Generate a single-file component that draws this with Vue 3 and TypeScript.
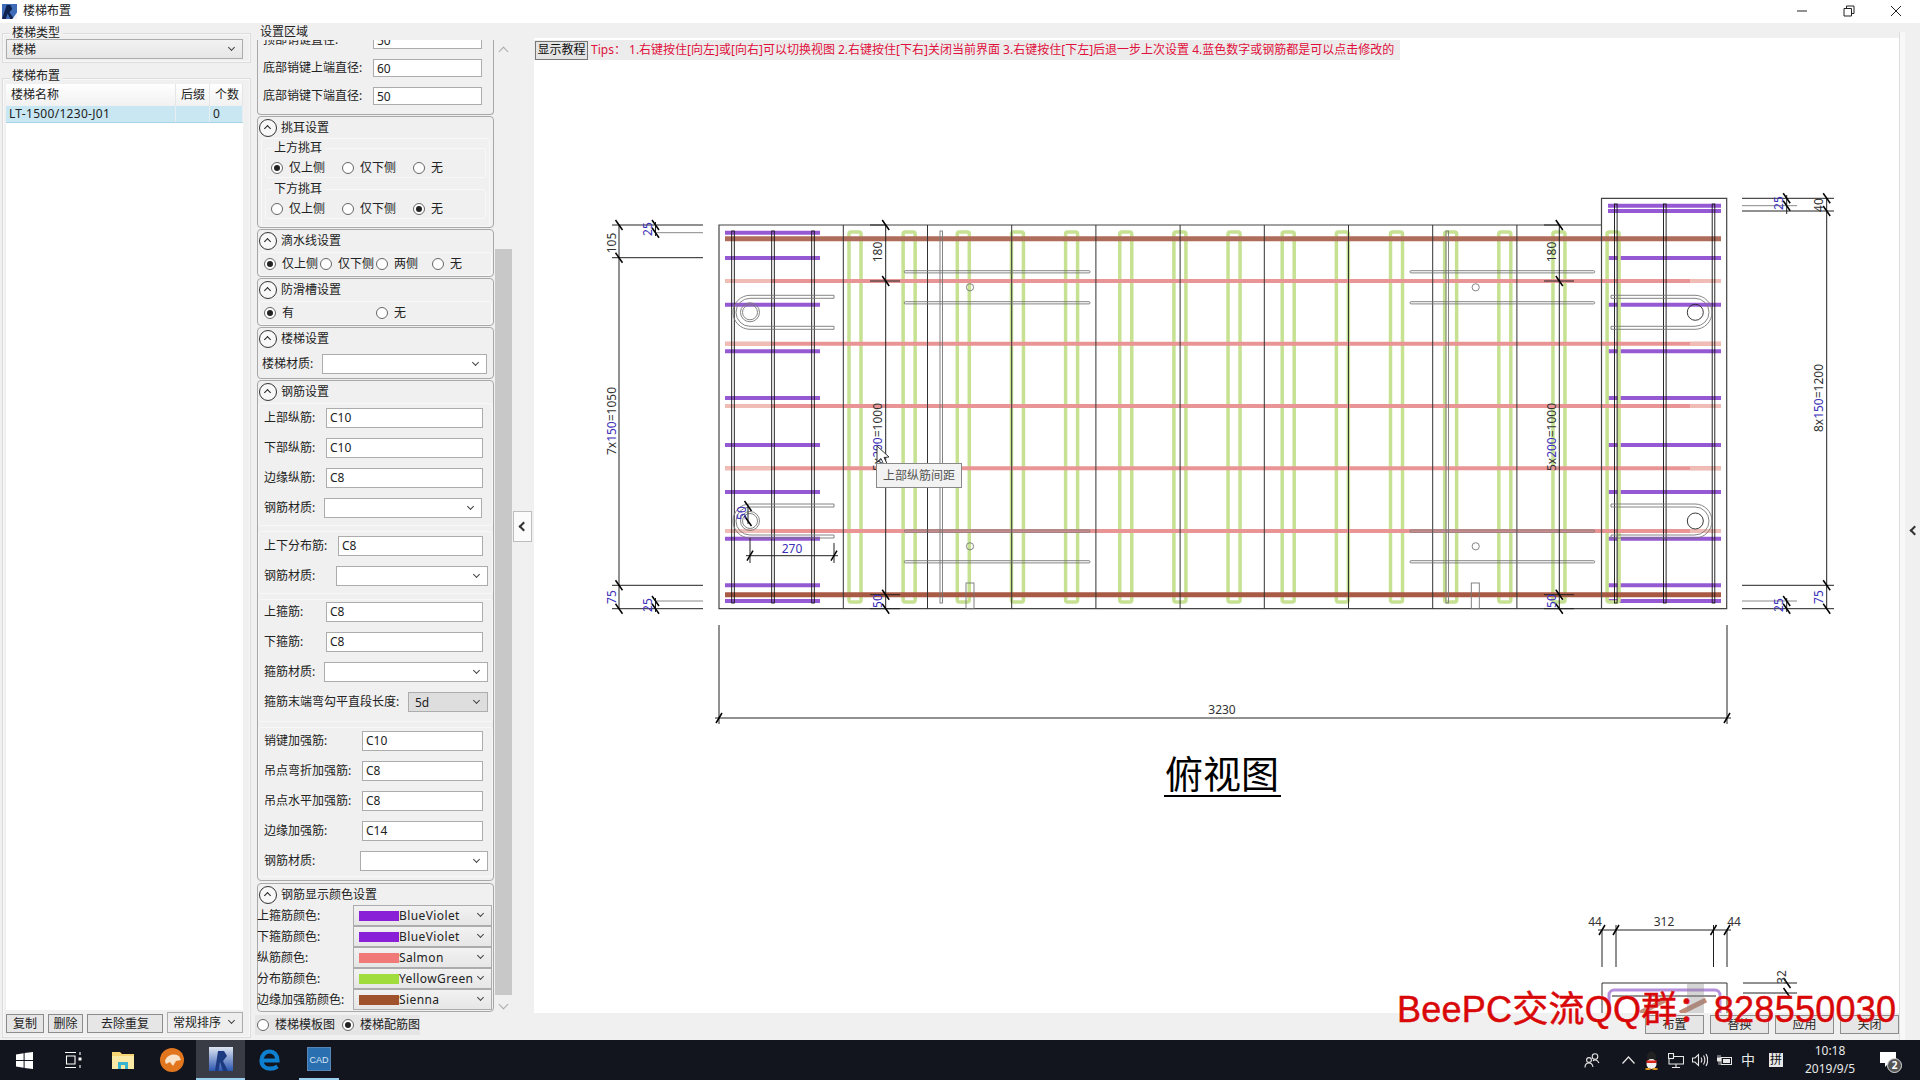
<template>
  <div class="window">
    <!-- 标题栏 -->
    <header class="titlebar">
      <svg class="app-icon" viewBox="0 0 16 16">
        <rect width="16" height="16" fill="#3f6cb8" />
        <path d="M0 16 L5 1 H9 L11 5 L8 9 L13 16 H9 L6 10 L4 16 Z" fill="#0f2350" />
        <path d="M11 16 L16 9 V16 Z" fill="#eef2f8" />
      </svg>
      <span class="title-text">楼梯布置</span>
      <div class="win-controls">
        <svg viewBox="0 0 12 12"><path d="M1 6 H11" /></svg>
        <svg viewBox="0 0 12 12"><path d="M1 3.5 H8.5 V11 H1 Z M3.5 3.5 V1 H11 V8.5 H8.5" /></svg>
        <svg viewBox="0 0 12 12"><path d="M1 1 L11 11 M11 1 L1 11" /></svg>
      </div>
    </header>

    <div class="body">
      <!-- 左侧列表 -->
      <aside class="left">
        <div class="group type-group">
          <span class="legend">楼梯类型</span>
          <div class="combo type-combo">楼梯</div>
        </div>
        <div class="group list-group">
          <span class="legend">楼梯布置</span>
          <div class="list">
            <div class="list-head">
              <span>楼梯名称</span><span>后缀</span><span>个数</span>
            </div>
            <div class="list-row">
              <span>LT-1500/1230-J01</span><span></span><span>0</span>
            </div>
          </div>
          <div class="left-actions">
            <button class="btn copy-btn">复制</button>
            <button class="btn del-btn">删除</button>
            <button class="btn dedupe-btn">去除重复</button>
            <div class="combo sort-combo">常规排序</div>
          </div>
        </div>
      </aside>

      <!-- 设置区域 -->
      <section class="settings">
        <span class="legend settings-legend">设置区域</span>
        <div class="scroll-wrap">
          <div class="scroll-content">
            <div class="panel first-panel">
              <div v-for="row in dowelRows" :key="row.label" class="row dowel-row">
                <span class="row-label">{{ row.label }}</span>
                <div class="field">{{ row.value }}</div>
              </div>
            </div>

            <div class="panel">
              <div class="panel-head"><i class="fold"></i>挑耳设置</div>
              <div class="inner ear-inner">
                <div v-for="ear in ears" :key="ear.title" class="ear-box">
                  <span class="legend ear-legend">{{ ear.title }}</span>
                  <label v-for="opt in earOptions" :key="opt" class="radio-item ear-item">
                    <i class="radio" :class="{ on: opt === ear.value }"></i>{{ opt }}
                  </label>
                </div>
              </div>
            </div>

            <div class="panel">
              <div class="panel-head"><i class="fold"></i>滴水线设置</div>
              <div class="inner radio-line">
                <label v-for="(opt, i) in dripOptions" :key="opt" class="radio-item drip-item">
                  <i class="radio" :class="{ on: i === 0 }"></i>{{ opt }}
                </label>
              </div>
            </div>

            <div class="panel">
              <div class="panel-head"><i class="fold"></i>防滑槽设置</div>
              <div class="inner radio-line">
                <label class="radio-item slip-item"><i class="radio on"></i>有</label>
                <label class="radio-item slip-item"><i class="radio"></i>无</label>
              </div>
            </div>

            <div class="panel stair-panel">
              <div class="panel-head"><i class="fold"></i>楼梯设置</div>
              <div class="row stair-row">
                <span class="row-label">楼梯材质:</span>
                <div class="combo white-combo"></div>
              </div>
            </div>

            <div class="panel rebar-panel">
              <div class="panel-head"><i class="fold"></i>钢筋设置</div>
              <div v-for="box in rebarBoxes" :key="box.key" class="rebar-box" :class="box.key">
                <div v-for="row in box.rows" :key="row.label" class="row">
                  <span class="row-label">{{ row.label }}</span>
                  <div v-if="row.kind === 'input'" class="field">{{ row.value }}</div>
                  <div v-else-if="row.kind === 'select'" class="combo white-combo"></div>
                  <div v-else class="combo hook-combo">{{ row.value }}</div>
                </div>
              </div>
            </div>

            <div class="panel color-panel">
              <div class="panel-head"><i class="fold"></i>钢筋显示颜色设置</div>
              <div v-for="c in colorRows" :key="c.label" class="color-row">
                <span class="color-label">{{ c.label }}</span>
                <div class="combo color-combo">
                  <i class="swatch" :style="{ background: c.color }"></i>{{ c.name }}
                </div>
              </div>
            </div>
          </div>
          <div class="scrollbar">
            <i class="sb-arrow up"></i>
            <div class="sb-thumb"></div>
            <i class="sb-arrow down"></i>
          </div>
        </div>
        <div class="view-switch">
          <label class="radio-item"><i class="radio"></i>楼梯模板图</label>
          <label class="radio-item"><i class="radio on"></i>楼梯配筋图</label>
        </div>
      </section>

      <button class="collapse-btn"><i></i></button>

      <!-- 图纸区域 -->
      <main class="canvas-area">
        <div class="sheet">
          <div class="tips-bar">
            <button class="tutorial-btn">显示教程</button>
            <span class="tips">Tips：&nbsp;1.右键按住[向左]或[向右]可以切换视图 2.右键按住[下右]关闭当前界面 3.右键按住[下左]后退一步上次设置 4.蓝色数字或钢筋都是可以点击修改的</span>
          </div>
          <svg class="drawing" viewBox="534 60 1365 953" width="1365" height="953">
            <!-- 箍筋 -->
            <g stroke="#8d4bd0" stroke-width="4" stroke-opacity="0.92">
              <line v-for="y in leftStirrups" :key="'ls' + y" x1="725" x2="820" :y1="y" :y2="y" />
              <line v-for="y in rightStirrups" :key="'rs' + y" x1="1608" x2="1721" :y1="y" :y2="y" />
            </g>
            <!-- 分布筋 -->
            <g fill="none" stroke="#c6e192" stroke-width="3.5">
              <rect v-for="x in greenBars" :key="'g' + x" :x="x" y="232" width="12" height="370" rx="2" />
            </g>
            <!-- 纵筋 -->
            <g stroke="#e99595" stroke-width="4">
              <line v-for="y in salmonBars" :key="'s' + y" x1="725" x2="1721" :y1="y" :y2="y" />
            </g>
            <g stroke="#efbdb6" stroke-width="4">
              <template v-for="y in salmonBars" :key="'sl' + y">
                <line x1="725" x2="772" :y1="y" :y2="y" />
                <line x1="1690" x2="1721" :y1="y" :y2="y" />
              </template>
            </g>
            <line x1="725" x2="1721" y1="238.7" y2="238.7" stroke="#ae6d5b" stroke-width="5" />
            <line x1="725" x2="1721" y1="594.7" y2="594.7" stroke="#a85a44" stroke-width="5" />

            <!-- 轮廓 -->
            <path d="M719 225 H1601.5 V198.3 H1726.7 V608.7 H719 Z M1601.5 225 V608.7" fill="none" stroke="#444" stroke-width="1.2" />
            <g stroke="#333" stroke-width="1">
              <line v-for="x in gridLines" :key="'v' + x" :x1="x" :x2="x" y1="225" y2="608.7" />
            </g>
            <g fill="none" stroke="#111" stroke-width="0.9">
              <rect v-for="x in leftTies" :key="'lt' + x" :x="x" y="231" width="2.6" height="372" />
              <rect v-for="x in rightTies" :key="'rt' + x" :x="x" y="204" width="2.6" height="399" />
            </g>
            <g fill="none" stroke="#777" stroke-width="0.9">
              <rect x="940" y="231" width="2.5" height="372" />
              <rect x="1446" y="231" width="2.5" height="372" />
              <rect x="966" y="583" width="8" height="25.7" />
              <rect x="1471.3" y="583" width="8" height="25.7" />
              <template v-for="y in pinLines" :key="'p' + y">
                <rect x="904.3" :y="y" width="185.7" height="2.2" rx="1" />
                <rect x="1410" :y="y" width="184.7" height="2.2" rx="1" />
              </template>
              <circle cx="970" cy="287.3" r="3.6" />
              <circle cx="970" cy="546.3" r="3.6" />
              <circle cx="1475.7" cy="287.3" r="3.6" />
              <circle cx="1475.7" cy="546.3" r="3.6" />
              <template v-for="y in loopCenters" :key="'l' + y">
                <path :d="leftLoop(y)" />
                <path :d="rightLoop(y)" />
                <circle cx="750" :cy="y" r="9.5" />
                <circle cx="750" :cy="y" r="7.5" />
                <circle cx="1695.3" :cy="y" r="8" stroke="#222" />
              </template>
            </g>

            <!-- 尺寸线 -->
            <g stroke="#222" stroke-width="1">
              <line v-for="(l, i) in dimLines" :key="'d' + i" :x1="l[0]" :y1="l[1]" :x2="l[2]" :y2="l[3]" />
            </g>
            <g stroke="#888" stroke-width="1">
              <line v-for="(l, i) in grayLines" :key="'dg' + i" :x1="l[0]" :y1="l[1]" :x2="l[2]" :y2="l[3]" />
            </g>
            <g stroke="#000" stroke-width="1.5">
              <line v-for="(t, i) in ticksV" :key="'tv' + i" :x1="t[0] - 3.5" :y1="t[1] - 5" :x2="t[0] + 3.5" :y2="t[1] + 5" />
              <line v-for="(t, i) in ticksH" :key="'th' + i" :x1="t[0] - 3" :y1="t[1] + 5" :x2="t[0] + 3" :y2="t[1] - 5" />
            </g>

            <!-- 尺寸文字 -->
            <g class="dim-text">
              <text v-for="t in dimTexts" :key="t.x + '-' + t.y" :x="t.x" :y="t.y" :transform="`rotate(-90 ${t.x} ${t.y})`" text-anchor="middle">
                <tspan v-for="(p, i) in t.parts" :key="i" :class="{ blue: p.blue }">{{ p.s }}</tspan>
              </text>
              <text x="792" y="553" text-anchor="middle" class="blue">270</text>
              <text x="1222" y="714" text-anchor="middle">3230</text>
              <text x="1595" y="926" text-anchor="middle">44</text>
              <text x="1664" y="926" text-anchor="middle">312</text>
              <text x="1734" y="926" text-anchor="middle">44</text>
            </g>

            <text x="1222" y="788" text-anchor="middle" class="view-title">俯视图</text>
            <line x1="1164" x2="1281" y1="796" y2="796" stroke="#000" stroke-width="2" />

            <!-- 下方剖面 -->
            <g fill="none">
              <path d="M1602 1013 V983 H1727 V1013" stroke="#333" />
              <rect x="1609" y="990" width="111" height="30" rx="5" stroke="#b48fdc" stroke-width="3" />
              <path d="M1612 996 H1716" stroke="#222" />
              <path d="M1640 1013 L1665 1000 M1680 1013 L1706 1000" stroke="#c08a78" stroke-width="5" />
            </g>
            <rect x="1687" y="983" width="17" height="30" fill="#888" opacity="0.35" />

            <!-- 鼠标和提示 -->
            <path d="M877 446 V462 L881 458.5 L884 465 L887 463.5 L884 457.5 L889 457 Z" fill="#fff" stroke="#222" stroke-width="0.9" />
          </svg>
          <div class="tooltip">上部纵筋间距</div>
        </div>
        <div class="bottom-actions">
          <button v-for="b in actionButtons" :key="b" class="btn action-btn">{{ b }}</button>
        </div>
      </main>

      <div class="right-rail"><i></i></div>
    </div>

    <!-- 任务栏 -->
    <footer class="taskbar">
      <div class="task-left">
        <div class="task-slot">
          <svg width="17" height="17" viewBox="0 0 17 17" fill="#fff">
            <path d="M0 2.4 L7.6 1.3 V8 H0 Z M8.6 1.1 L17 0 V8 H8.6 Z M0 9 H7.6 V15.7 L0 14.6 Z M8.6 9 H17 V17 L8.6 15.9 Z" />
          </svg>
        </div>
        <div class="task-slot">
          <svg width="17" height="16" viewBox="0 0 17 16" fill="none" stroke="#fff" stroke-width="1.1">
            <path d="M0 .5 H11 M0 15.5 H11 M1.5 4 H10 V12 H1.5 Z M15 0 V3 M15 13 V16" />
            <rect x="13.5" y="5.5" width="3" height="3" fill="#fff" stroke="none" />
          </svg>
        </div>
        <div class="task-slot">
          <svg width="22" height="18" viewBox="0 0 22 18">
            <path d="M0 1 H8 L10 3 H22 V18 H0 Z" fill="#f6d673" />
            <rect y="5" width="22" height="13" fill="#fbe9a6" />
            <path d="M6 18 V11 H16 V18 H13 V14 H9 V18 Z" fill="#39b4d0" />
          </svg>
        </div>
        <div class="task-slot">
          <svg width="24" height="24" viewBox="0 0 24 24">
            <circle cx="12" cy="12" r="12" fill="#e2761f" />
            <path d="M5 13 C7 7 13 5 19 8 L21 12 L16 13 L13 18 L10 14 L6 16 Z" fill="#f8e2c8" />
          </svg>
        </div>
        <div class="task-slot active">
          <svg width="24" height="24" viewBox="0 0 24 24">
            <defs>
              <linearGradient id="revitBg" x1="0" y1="0" x2="0" y2="1">
                <stop offset="0" stop-color="#dfe6f2" />
                <stop offset="1" stop-color="#2a55b0" />
              </linearGradient>
            </defs>
            <rect width="24" height="24" fill="url(#revitBg)" />
            <path d="M6 24 L9 4 H15 L18 9 L14 14 L19 24 H14 L11 15 L9.5 24 Z" fill="#1c3a80" />
          </svg>
        </div>
        <div class="task-slot">
          <svg width="21" height="22" viewBox="0 0 21 22" fill="none" stroke="#0f7fd0" stroke-width="4.2">
            <path d="M3 11.5 H18.5 C18.5 6 15 2.5 10.5 2.5 C6 2.5 2.5 6.5 2.5 11.5 C2.5 16.5 6 19.7 11 19.7 C14 19.7 16.5 18.8 18.5 17.5" />
          </svg>
        </div>
        <div class="task-slot underlined">
          <svg width="24" height="24" viewBox="0 0 24 24">
            <rect width="24" height="24" rx="2" fill="#2a6fb0" stroke="#7f9fc0" />
            <text x="12" y="16" text-anchor="middle" class="cad-text">CAD</text>
          </svg>
        </div>
      </div>
      <div class="tray">
        <svg class="t-people" width="16" height="15" viewBox="0 0 16 15" fill="none" stroke="#e8e8e8" stroke-width="1.1">
          <circle cx="11" cy="3.5" r="2.8" /><circle cx="5" cy="7" r="2.4" />
          <path d="M1 14.5 C1 11 3 10 5 10 C7 10 8.5 11 9 14 M9 8 C10 6.5 13 6.3 15 10" />
        </svg>
        <svg class="t-chevron" width="13" height="8" viewBox="0 0 13 8" fill="none" stroke="#e8e8e8" stroke-width="1.2"><path d="M.5 7.5 L6.5 1 L12.5 7.5" /></svg>
        <svg class="t-qq" width="15" height="19" viewBox="0 0 15 19">
          <ellipse cx="7.5" cy="6" rx="4.5" ry="5.5" fill="#222" />
          <ellipse cx="7.5" cy="13" rx="5" ry="5" fill="#f2f2f2" />
          <path d="M2 9.5 H13 L12 12 H3 Z" fill="#d8261c" />
          <ellipse cx="4" cy="18" rx="3" ry="1" fill="#e8a020" /><ellipse cx="11" cy="18" rx="3" ry="1" fill="#e8a020" />
        </svg>
        <svg class="t-net" width="16" height="15" viewBox="0 0 16 15" fill="none" stroke="#e8e8e8" stroke-width="1.1">
          <path d="M1 3.5 H15.5 V11 H1 V6 M8 11 V14 M4 14.5 H12" /><rect x=".5" y=".5" width="5" height="5" fill="#14171f" />
        </svg>
        <svg class="t-vol" width="16" height="14" viewBox="0 0 16 14" fill="none" stroke="#e8e8e8" stroke-width="1.1">
          <path d="M.5 5 H3 L6.5 1.5 V12.5 L3 9 H.5 Z M9 4.5 C10 6 10 8 9 9.5 M11.5 2.5 C13 5 13 9 11.5 11.5 M14 1 C16 4.5 16 9.5 14 13" />
        </svg>
        <svg class="t-bat" width="16" height="11" viewBox="0 0 16 11">
          <rect x="4" y="2.5" width="10.5" height="7" fill="none" stroke="#e8e8e8" />
          <rect x="6" y="4" width="7" height="4" fill="#e8e8e8" />
          <path d="M0 3 H4 V6 H0 Z M1 0 V3 M3 0 V3 M2 6 V10" stroke="#e8e8e8" fill="#e8e8e8" stroke-width=".8" />
        </svg>
        <span class="t-zh">中</span>
        <span class="t-pin">拼</span>
        <div class="clock">
          <span>10:18</span>
          <span>2019/9/5</span>
        </div>
        <div class="notify">
          <svg width="16" height="15" viewBox="0 0 16 15" fill="#fff"><path d="M0 0 H16 V11 H9 L5 15 V11 H0 Z" /></svg>
          <b>2</b>
        </div>
      </div>
    </footer>

    <div class="watermark">BeePC交流QQ群：828550030</div>
  </div>
</template>

<script setup lang="ts">
type RebarRow = { label: string; value?: string; kind: 'input' | 'select' | 'hook' };
type DimPart = { s: string; blue?: boolean };

const dowelRows = [
  { label: '顶部销键直径:', value: '50' },
  { label: '底部销键上端直径:', value: '60' },
  { label: '底部销键下端直径:', value: '50' }
];

const earOptions = ['仅上侧', '仅下侧', '无'];
const ears = [
  { title: '上方挑耳', value: '仅上侧' },
  { title: '下方挑耳', value: '无' }
];
const dripOptions = ['仅上侧', '仅下侧', '两侧', '无'];

const rebarBoxes: { key: string; rows: RebarRow[] }[] = [
  {
    key: 'box-a',
    rows: [
      { label: '上部纵筋:', value: 'C10', kind: 'input' },
      { label: '下部纵筋:', value: 'C10', kind: 'input' },
      { label: '边缘纵筋:', value: 'C8', kind: 'input' },
      { label: '钢筋材质:', kind: 'select' }
    ]
  },
  {
    key: 'box-b',
    rows: [
      { label: '上下分布筋:', value: 'C8', kind: 'input' },
      { label: '钢筋材质:', kind: 'select' }
    ]
  },
  {
    key: 'box-c',
    rows: [
      { label: '上箍筋:', value: 'C8', kind: 'input' },
      { label: '下箍筋:', value: 'C8', kind: 'input' },
      { label: '箍筋材质:', kind: 'select' },
      { label: '箍筋末端弯勾平直段长度:', value: '5d', kind: 'hook' }
    ]
  },
  {
    key: 'box-d',
    rows: [
      { label: '销键加强筋:', value: 'C10', kind: 'input' },
      { label: '吊点弯折加强筋:', value: 'C8', kind: 'input' },
      { label: '吊点水平加强筋:', value: 'C8', kind: 'input' },
      { label: '边缘加强筋:', value: 'C14', kind: 'input' },
      { label: '钢筋材质:', kind: 'select' }
    ]
  }
];

const colorRows = [
  { label: '上箍筋颜色:', color: '#8a1fd8', name: 'BlueViolet' },
  { label: '下箍筋颜色:', color: '#8a1fd8', name: 'BlueViolet' },
  { label: '纵筋颜色:', color: '#f07a78', name: 'Salmon' },
  { label: '分布筋颜色:', color: '#9fdc3c', name: 'YellowGreen' },
  { label: '边缘加强筋颜色:', color: '#a0522d', name: 'Sienna' }
];

const actionButtons = ['布置', '替换', '应用', '关闭'];

// 图纸数据，坐标直接用画布坐标
const commonStirrups = [258, 304.7, 351.3, 398, 445, 492, 538.7, 585.3, 601];
const leftStirrups = [232.7, ...commonStirrups];
const rightStirrups = [205.7, 211, ...commonStirrups];
const salmonBars = [281, 343.7, 406, 468.3, 531];
const greenBars = Array.from({ length: 15 }, (_, i) => 849 + i * 54.15);
const gridLines = Array.from({ length: 9 }, (_, i) => 843.3 + i * 84.2);
const leftTies = [731.7, 771.7, 811.7];
const rightTies = [1614.5, 1663.5, 1712.2];
const pinLines = [270.7, 301.7, 530, 560.7];
const loopCenters = [312.3, 521];

const leftLoop = (y: number) =>
  `M834 ${y - 17} H750 A17 17 0 0 0 750 ${y + 17} H834 V${y + 14} H750 A14 14 0 0 1 750 ${y - 14} H834 Z`;
const rightLoop = (y: number) =>
  `M1611 ${y - 17} H1695 A17 17 0 0 1 1695 ${y + 17} H1611 V${y + 14} H1695 A14 14 0 0 0 1695 ${y - 14} H1611 Z`;

const dimLines: number[][] = [
  [612, 225, 703, 225], [612, 257.7, 703, 257.7], [612, 585.3, 703, 585.3], [612, 608.7, 703, 608.7],
  [619, 225, 619, 608.7], [655.5, 222, 655.5, 236], [655.5, 598, 655.5, 612],
  [870, 225, 885.7, 225], [870, 281, 900, 281], [885.7, 225, 885.7, 608.7], [870, 594.7, 900, 594.7], [870, 608.7, 900, 608.7],
  [1544, 225, 1559.3, 225], [1544, 281, 1574, 281], [1559.3, 225, 1559.3, 608.7], [1544, 594.7, 1574, 594.7], [1544, 608.7, 1574, 608.7],
  [1742, 198.3, 1834, 198.3], [1742, 211, 1834, 211], [1742, 585.3, 1834, 585.3], [1742, 608.7, 1834, 608.7],
  [1826.7, 198.3, 1826.7, 608.7], [1786.7, 195, 1786.7, 214], [1786.7, 598, 1786.7, 612],
  [750, 538, 750, 563], [834, 543, 834, 563], [746, 555.7, 838, 555.7], [748, 505, 748, 524],
  [719, 625, 719, 724], [1727, 625, 1727, 724], [715, 718, 1731, 718],
  [1602, 930, 1602, 967], [1616, 925, 1616, 967], [1713.5, 925, 1713.5, 967], [1727, 930, 1727, 967], [1598, 930, 1731, 930],
  [1743, 983, 1797, 983], [1743, 993, 1797, 993]
];
const grayLines: number[][] = [
  [655, 232.7, 703, 232.7], [655, 601, 703, 601], [1742, 205.7, 1797, 205.7], [1742, 601, 1797, 601]
];
const ticksV: number[][] = [
  [619, 225], [619, 257.7], [619, 585.3], [619, 608.7], [655.5, 225], [655.5, 232.7], [655.5, 601], [655.5, 608.7],
  [885.7, 225], [885.7, 281], [885.7, 594.7], [885.7, 608.7], [1559.3, 225], [1559.3, 281], [1559.3, 594.7], [1559.3, 608.7],
  [1826.7, 198.3], [1826.7, 211], [1826.7, 585.3], [1826.7, 608.7], [1786.7, 198.3], [1786.7, 205.7], [1786.7, 601], [1786.7, 608.7],
  [748, 506], [748, 521], [1787, 983], [1787, 993]
];
const ticksH: number[][] = [
  [750, 555.7], [834, 555.7], [719, 718], [1727, 718], [1602, 930], [1616, 930], [1713.5, 930], [1727, 930]
];

const dimTexts: { x: number; y: number; parts: DimPart[] }[] = [
  { x: 616, y: 243, parts: [{ s: '105' }] },
  { x: 652, y: 229, parts: [{ s: '25', blue: true }] },
  { x: 652, y: 605, parts: [{ s: '25', blue: true }] },
  { x: 616, y: 421, parts: [{ s: '7x' }, { s: '150', blue: true }, { s: '=1050' }] },
  { x: 616, y: 597, parts: [{ s: '75', blue: true }] },
  { x: 882, y: 252, parts: [{ s: '180' }] },
  { x: 882, y: 437, parts: [{ s: '5x' }, { s: '200', blue: true }, { s: '=1000' }] },
  { x: 882, y: 601, parts: [{ s: '50', blue: true }] },
  { x: 1556, y: 252, parts: [{ s: '180' }] },
  { x: 1556, y: 437, parts: [{ s: '5x' }, { s: '200', blue: true }, { s: '=1000' }] },
  { x: 1556, y: 601, parts: [{ s: '50', blue: true }] },
  { x: 1783, y: 203, parts: [{ s: '25', blue: true }] },
  { x: 1783, y: 605, parts: [{ s: '25', blue: true }] },
  { x: 1823, y: 205, parts: [{ s: '40' }] },
  { x: 1823, y: 398, parts: [{ s: '8x' }, { s: '150', blue: true }, { s: '=1200' }] },
  { x: 1823, y: 597, parts: [{ s: '75', blue: true }] },
  { x: 746, y: 513, parts: [{ s: '50', blue: true }] },
  { x: 1786, y: 977, parts: [{ s: '32' }] }
];
</script>

<style>
html,
body {
  margin: 0;
  background: #fff;
}
</style>

<style scoped>
.window {
  position: relative;
  width: 1920px;
  height: 1080px;
  overflow: hidden;
  display: flex;
  flex-direction: column;
  font-family: "Noto Sans", "Noto Sans CJK SC", sans-serif;
  font-size: 12px;
  line-height: 16px;
  color: #222;
  background: #f0f0f0;
}

/* 标题栏 */
.titlebar {
  height: 23px;
  flex-shrink: 0;
  display: flex;
  align-items: center;
  background: #fff;
  padding: 0 0 1px 2px;
  box-sizing: border-box;
}
.app-icon {
  width: 15px;
  height: 15px;
}
.title-text {
  margin-left: 6px;
}
.win-controls {
  margin-left: auto;
  display: flex;
  gap: 35px;
  padding-right: 18px;
}
.win-controls svg {
  width: 12px;
  height: 12px;
  fill: none;
  stroke: #222;
  stroke-width: 1;
}

.body {
  flex: 1;
  display: flex;
  min-height: 0;
}

.group {
  position: relative;
  border: 1px solid #dcdcdc;
  box-shadow: inset 0 0 0 1px #f8f8f8;
  box-sizing: border-box;
}
.legend {
  position: absolute;
  left: 7px;
  top: -9px;
  padding: 0 3px 0 2px;
  background: #f0f0f0;
  white-space: nowrap;
}

/* 左侧 */
.left {
  width: 254px;
  flex-shrink: 0;
  padding: 10px 3px 2px 2px;
  box-sizing: border-box;
  display: flex;
  flex-direction: column;
  gap: 15px;
}
.type-group {
  height: 30px;
  padding: 5px 4px 0 3px;
}
.list-group {
  flex: 1;
  padding: 5px 7px 0 3px;
  display: flex;
  flex-direction: column;
}
.list-group > .legend {
  top: -11px;
}
.list {
  flex: 1;
  background: #fff;
}
.list-head,
.list-row {
  display: grid;
  grid-template-columns: 170px 34px 33px;
}
.list-head {
  height: 23px;
  line-height: 22px;
  background: linear-gradient(#fff, #f1f1f1);
  border-bottom: 1px solid #d5d5d5;
  box-sizing: border-box;
}
.list-head span {
  padding-left: 5px;
  border-right: 1px solid #e6e6e6;
}
.list-row {
  height: 17px;
  line-height: 16px;
  background: #c9e7f3;
  border-bottom: 1px solid #a9d4e6;
  box-sizing: border-box;
  margin-top: -1px;
  letter-spacing: 0.3px;
}
.list-row span {
  padding-left: 3px;
  border-right: 1px solid #e6eef2;
}
.left-actions {
  height: 27px;
  display: flex;
  align-items: flex-start;
  padding-top: 4px;
  box-sizing: border-box;
  gap: 4px;
}

.btn {
  font: inherit;
  color: #222;
  height: 19px;
  padding: 0;
  border: 1px solid #8c8c8c;
  background: #e6e6e6;
  box-sizing: border-box;
}
.copy-btn {
  width: 38px;
}
.del-btn {
  width: 35px;
}
.dedupe-btn {
  width: 76px;
}

/* 下拉框 */
.combo {
  position: relative;
  height: 20px;
  line-height: 19px;
  box-sizing: border-box;
  border: 1px solid #acacac;
  background: linear-gradient(#f2f2f2, #e6e6e6);
  padding-left: 5px;
}
.combo::after {
  content: "";
  position: absolute;
  right: 8px;
  top: 5px;
  width: 4px;
  height: 4px;
  border-right: 1.3px solid #444;
  border-bottom: 1.3px solid #444;
  transform: rotate(45deg);
}
.white-combo {
  background: #fff;
}
.type-combo {
  width: 237px;
}
.sort-combo {
  width: 76px;
  margin-top: -2px;
  text-align: left;
  height: 21px;
  background: #eee;
}

/* 设置区域 */
.settings {
  position: relative;
  width: 257px;
  flex-shrink: 0;
  margin-left: 1px;
  padding-top: 17px;
  box-sizing: border-box;
}
.settings-legend {
  left: 3px;
  top: 1px;
}
.scroll-wrap {
  height: 972px;
  display: flex;
  overflow: hidden;
}
.scroll-content {
  width: 237px;
  margin-left: 2px;
  display: flex;
  flex-direction: column;
  gap: 1px;
  flex-shrink: 0;
}
.panel {
  border: 1px solid #a8a8a8;
  border-radius: 4px;
  box-sizing: border-box;
  background: #f0f0f0;
}
.first-panel {
  height: 75px;
  overflow: hidden;
  border-top: 0;
  border-radius: 0 0 4px 4px;
}
.panel-head {
  display: flex;
  align-items: center;
  height: 21px;
  gap: 4px;
  padding-left: 1px;
}
.fold {
  position: relative;
  display: block;
  width: 16px;
  height: 16px;
  border: 1.5px solid #333;
  border-radius: 50%;
  background: #f8f8f8;
}
.fold::after {
  content: "";
  position: absolute;
  left: 5px;
  top: 6.5px;
  width: 4px;
  height: 4px;
  border-left: 1.6px solid #222;
  border-top: 1.6px solid #222;
  transform: rotate(45deg);
}

.row {
  display: flex;
  align-items: center;
  height: 20px;
  margin-bottom: 10px;
}
.row:last-child {
  margin-bottom: 0;
}
.field {
  box-sizing: border-box;
  height: 20px;
  line-height: 17px;
  padding-left: 3px;
  background: #fff;
  border: 1px solid #acacac;
}
.row-label {
  white-space: nowrap;
}

.dowel-row {
  height: 18px;
  margin-bottom: 10px;
  padding-left: 5px;
}
.dowel-row:first-child {
  margin-top: -9px;
}
.dowel-row .row-label {
  width: 110px;
}
.dowel-row .field {
  width: 109px;
  height: 18px;
}

.inner {
  margin: 0 3px;
  border: 1px solid #f8f8f8;
  border-radius: 3px;
  box-sizing: border-box;
}
.ear-inner {
  height: 89px;
  padding: 9px 3px 0;
}
.ear-box {
  position: relative;
  height: 30px;
  margin-bottom: 11px;
  padding: 9px 0 0 5px;
  border: 1px solid #f8f8f8;
  border-radius: 3px;
  box-sizing: border-box;
  display: flex;
}
.ear-legend {
  left: 6px;
  top: -9px;
}
.radio-item {
  display: flex;
  align-items: center;
  gap: 6px;
  white-space: nowrap;
}
.radio {
  display: block;
  position: relative;
  width: 12px;
  height: 12px;
  border: 1px solid #666;
  border-radius: 50%;
  background: #fff;
  box-sizing: border-box;
  flex-shrink: 0;
}
.radio.on::after {
  content: "";
  position: absolute;
  left: 2px;
  top: 2px;
  width: 6px;
  height: 6px;
  border-radius: 50%;
  background: #222;
}
.ear-item {
  width: 71px;
}
.radio-line {
  height: 24px;
  margin: 1px 1px 0;
  display: flex;
  align-items: center;
  padding-left: 4px;
}
.drip-item {
  width: 56px;
}
.slip-item {
  width: 112px;
}
.stair-panel {
  height: 52px;
}
.stair-row {
  margin-top: 5px;
  padding-left: 4px;
}
.stair-row .row-label {
  width: 60px;
}
.stair-row .combo {
  width: 165px;
}

.rebar-panel {
  height: 501px;
}
.rebar-box {
  --label: 62px;
  --input: 157px;
  --select: 158px;
  margin: 1px 0 5px;
  padding: 4px 0 0 5px;
  border: 1px solid #f8f8f8;
  border-radius: 3px;
  box-sizing: border-box;
}
.rebar-box .row-label {
  width: var(--label);
  flex-shrink: 0;
}
.rebar-box .field {
  width: var(--input);
}
.rebar-box .white-combo {
  width: var(--select);
  margin-left: -2px;
}
.box-a {
  height: 123px;
}
.box-b {
  --label: 74px;
  --input: 145px;
  --select: 152px;
  height: 63px;
}
.box-c {
  --select: 164px;
  height: 123px;
  padding-top: 2px;
}
.box-d {
  --label: 98px;
  --input: 121px;
  --select: 128px;
  height: 150px;
  padding-top: 3px;
  margin-bottom: 0;
}
.box-c .row:last-child .row-label {
  width: 144px;
}
.hook-combo {
  width: 80px;
  padding-left: 6px;
  background: #dedede;
}

.color-panel {
  height: 129px;
  margin-top: 1px;
}
.color-row {
  display: flex;
  align-items: center;
  height: 21px;
}
.color-label {
  width: 96px;
  flex-shrink: 0;
  margin-left: -1px;
  white-space: nowrap;
}
.color-combo {
  width: 139px;
  height: 21px;
  display: flex;
  align-items: center;
  padding-left: 5px;
  letter-spacing: 0.4px;
}
.swatch {
  display: block;
  width: 40px;
  height: 10px;
}

.scrollbar {
  width: 17px;
  margin-left: 1px;
  position: relative;
  background: #f0f0f0;
  padding-top: 209px;
  box-sizing: border-box;
}
.sb-thumb {
  height: 746px;
  background: #c8c8c8;
}
.sb-arrow {
  position: absolute;
  left: 5px;
  width: 6px;
  height: 6px;
  border-left: 1px solid #aaa;
  border-top: 1px solid #aaa;
}
.sb-arrow.up {
  top: 8px;
  transform: rotate(45deg);
}
.sb-arrow.down {
  bottom: 4px;
  transform: rotate(225deg);
}
.view-switch {
  display: flex;
  align-items: center;
  gap: 7px;
  width: 165px;
  height: 20px;
  margin-top: 3px;
  padding-left: 2px;
  background: #e5e5e5;
  box-sizing: border-box;
}

.collapse-btn {
  position: relative;
  flex-shrink: 0;
  align-self: flex-start;
  width: 19px;
  height: 31px;
  margin: 488px 2px 0 1px;
  padding: 0;
  background: #fbfbfb;
  border: 1px solid #bdbdbd;
}
.collapse-btn i,
.right-rail i {
  position: absolute;
  width: 5px;
  height: 5px;
  border-left: 2px solid #333;
  border-bottom: 2px solid #333;
  transform: rotate(45deg);
}
.collapse-btn i {
  left: 6px;
  top: 11px;
}

/* 图纸 */
.canvas-area {
  position: relative;
  width: 1365px;
  flex-shrink: 0;
  display: flex;
  flex-direction: column;
  padding-top: 15px;
  box-sizing: border-box;
  border-top: 0;
}
.sheet {
  position: relative;
  height: 975px;
  background: #fff;
  padding-top: 2px;
  box-sizing: border-box;
}
.tips-bar {
  height: 20px;
  width: 866px;
  display: flex;
  align-items: center;
  gap: 3px;
  background: #ececec;
}
.tutorial-btn {
  font: inherit;
  width: 53px;
  height: 19px;
  padding: 0;
  margin-left: 1px;
  border: 1px solid #777;
  background: #e4e4e4;
  color: #111;
}
.tips {
  color: #e0103c;
  white-space: nowrap;
}
.drawing {
  display: block;
}
.dim-text {
  font-size: 12px;
  fill: #333;
}
.dim-text .blue {
  fill: #3a2fb8;
}
.view-title {
  font-size: 38px;
  fill: #000;
}
.tooltip {
  position: absolute;
  left: 342px;
  top: 425px;
  width: 86px;
  height: 25px;
  line-height: 23px;
  text-align: center;
  color: #555;
  background: #f2f2f2;
  border: 1px solid #888;
  box-sizing: border-box;
}
.bottom-actions {
  display: flex;
  justify-content: flex-end;
  gap: 6px;
  padding: 2px 0 0;
}
.action-btn {
  width: 59px;
}

.right-rail {
  position: relative;
  flex: 1;
  margin-top: 9px;
  border-left: 1px solid #ddd;
  box-shadow: inset 5px 0 0 #f8f8f8;
}
.right-rail i {
  left: 11px;
  top: 495px;
}

/* 任务栏 */
.taskbar {
  height: 40px;
  flex-shrink: 0;
  display: flex;
  justify-content: space-between;
  background: #12151d;
  color: #e8e8e8;
}
.task-left {
  display: flex;
}
.task-slot {
  width: 49px;
  display: flex;
  align-items: center;
  justify-content: center;
  box-sizing: border-box;
}
.task-slot.active {
  background: #3a3c45;
  border-bottom: 2px solid #99d0ee;
}
.task-slot.underlined {
  border-bottom: 2px solid #99d0ee;
  margin-left: 5px;
  width: 40px;
}
.cad-text {
  font-size: 9px;
  fill: #d8e6f4;
  font-family: "Liberation Sans", sans-serif;
}
.tray {
  display: flex;
  align-items: center;
  padding-right: 24px;
}
.t-chevron {
  margin-left: 22px;
}
.t-qq {
  margin-left: 9px;
}
.t-net {
  margin-left: 9px;
}
.t-vol {
  margin-left: 8px;
}
.t-bat {
  margin-left: 9px;
}
.t-zh {
  margin-left: 8px;
  font-size: 14px;
}
.t-pin {
  margin-left: 14px;
  width: 14px;
  height: 14px;
  line-height: 14px;
  text-align: center;
  background: #e8e8e8;
  color: #111;
  font-size: 12px;
}
.clock {
  display: flex;
  flex-direction: column;
  align-items: center;
  width: 60px;
  margin-left: 17px;
  line-height: 18px;
}
.notify {
  position: relative;
  margin-left: 20px;
  height: 16px;
}
.notify b {
  position: absolute;
  left: 7px;
  top: 6px;
  width: 15px;
  height: 15px;
  line-height: 13px;
  text-align: center;
  font-size: 10px;
  color: #fff;
  background: #555;
  border: 1px solid #ddd;
  border-radius: 50%;
  box-sizing: border-box;
}

.watermark {
  position: absolute;
  left: 1397px;
  top: 987px;
  font-family: "Liberation Sans", "Noto Sans CJK SC", sans-serif;
  font-size: 36px;
  line-height: 46px;
  letter-spacing: 0.25px;
  color: #d90808;
  white-space: nowrap;
  -webkit-text-stroke: 0.5px #d90808;
  text-shadow: 0 0 2px rgba(255, 255, 255, 0.7);
}
</style>
